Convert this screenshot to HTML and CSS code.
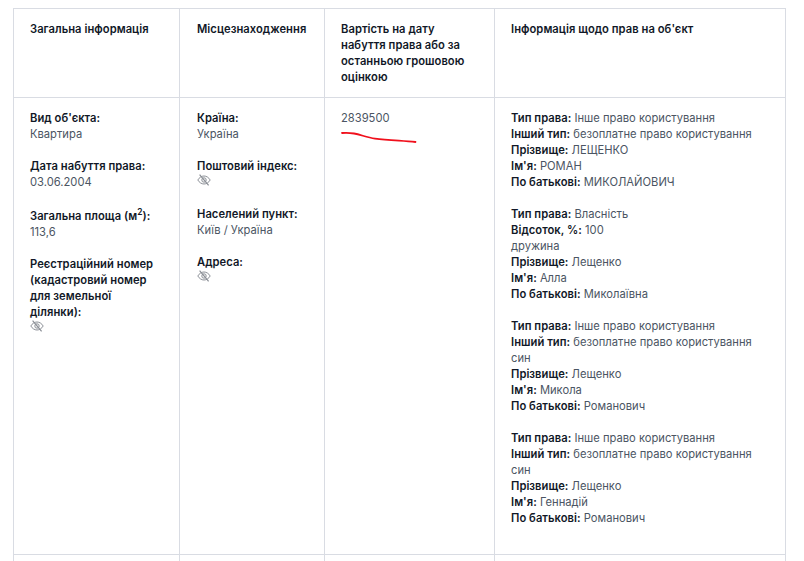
FILE: index.html
```html
<!DOCTYPE html>
<html lang="uk">
<head>
<meta charset="utf-8">
<title>Об'єкт</title>
<link rel="stylesheet" href="styles.css">
</head>
<body>
<svg width="0" height="0" class="defs"><defs>
<symbol id="eye" viewBox="0 0 14 12">
<path d="M0.8 6C2.4 3.4 4.6 2 7 2s4.6 1.4 6.2 4C11.6 8.6 9.4 10 7 10S2.4 8.6 0.8 6Z" fill="none" stroke="currentColor" stroke-width="1"/>
<circle cx="7" cy="6" r="2.2" fill="none" stroke="currentColor" stroke-width="1"/>
<path d="M2.6 0.6L11.6 11.4" fill="none" stroke="currentColor" stroke-width="1.2"/>
</symbol>
</defs></svg>
<table class="tbl">
<colgroup><col class="c1"><col class="c2"><col class="c3"><col class="c4"></colgroup>
<thead>
<tr>
<th>Загальна інформація</th>
<th>Місцезнаходження</th>
<th>Вартість на дату набуття права або за останньою грошовою оцінкою</th>
<th>Інформація щодо прав на об'єкт</th>
</tr>
</thead>
<tbody>
<tr>
<td>
<div class="item"><b>Вид об'єкта:</b><br>Квартира</div>
<div class="item"><b>Дата набуття права:</b><br>03.06.2004</div>
<div class="item"><b>Загальна площа (м<sup>2</sup>):</b><br>113,6</div>
<div class="item"><b>Реєстраційний номер (кадастровий номер для земельної ділянки):</b><br><svg class="eye"><use href="#eye"/></svg></div>
</td>
<td>
<div class="item"><b>Країна:</b><br>Україна</div>
<div class="item"><b>Поштовий індекс:</b><br><svg class="eye"><use href="#eye"/></svg></div>
<div class="item"><b>Населений пункт:</b><br>Київ / Україна</div>
<div class="item"><b>Адреса:</b><br><svg class="eye"><use href="#eye"/></svg></div>
</td>
<td class="price">2839500
<svg class="scribble" width="76" height="14" viewBox="0 0 76 14"><path d="M1 3C5 2.600 9 2.800 13 3.500C20 4.800 26 7.500 34 8.600C46 10 58 10.600 74.500 12" fill="none" stroke="#f0101c" stroke-width="1.800" stroke-linecap="round"/></svg>
</td>
<td>
<div class="item"><b>Тип права:</b> Інше право користування<br><b>Інший тип:</b> безоплатне право користування<br><b>Прізвище:</b> ЛЕЩЕНКО<br><b>Ім'я:</b> РОМАН<br><b>По батькові:</b> МИКОЛАЙОВИЧ</div>
<div class="item"><b>Тип права:</b> Власність<br><b>Відсоток, %:</b> 100<br>дружина<br><b>Прізвище:</b> Лещенко<br><b>Ім'я:</b> Алла<br><b>По батькові:</b> Миколаївна</div>
<div class="item"><b>Тип права:</b> Інше право користування<br><b>Інший тип:</b> безоплатне право користування<br>син<br><b>Прізвище:</b> Лещенко<br><b>Ім'я:</b> Микола<br><b>По батькові:</b> Романович</div>
<div class="item"><b>Тип права:</b> Інше право користування<br><b>Інший тип:</b> безоплатне право користування<br>син<br><b>Прізвище:</b> Лещенко<br><b>Ім'я:</b> Геннадій<br><b>По батькові:</b> Романович</div>
</td>
</tr>
<tr class="next"><td></td><td></td><td></td><td></td></tr>
</tbody>
</table>
</body>
</html>
```
FILE: styles.css
```css
html, body {
  margin: 0;
  height: 561px;
  overflow: hidden;
  background: #fff;
}
body {
  padding: 8px 0 0 13px;
  box-sizing: border-box;
  font-family: Inter, "Liberation Sans", sans-serif;
  font-size: 11.2px;
  line-height: 16px;
  color: #4b5563;
}
.defs { position: absolute; }
.tbl {
  border-collapse: collapse;
  table-layout: fixed;
  width: 772px;
}
.c1 { width: 166px; }
.c2 { width: 145px; }
.c3 { width: 170px; }
.c4 { width: 291px; }
th, td {
  border: 1px solid #d9dce3;
  padding: 12px 16px;
  vertical-align: top;
  text-align: left;
}
th:nth-child(2), td:nth-child(2) { padding-left: 17px; }
th, b {
  font-weight: 600;
  color: #111827;
  letter-spacing: 0.04px;
}
.item { margin-bottom: 16px; }
sup {
  font-size: 8.4px;
  line-height: 12px;
  vertical-align: 5px;
}
.eye {
  display: block;
  width: 14px;
  height: 12px;
  padding-bottom: 4px;
  color: #8b8f96;
}
.price { position: relative; }
.scribble {
  position: absolute;
  left: 16px;
  top: 32px;
}
.next td { height: 40px; }
```
